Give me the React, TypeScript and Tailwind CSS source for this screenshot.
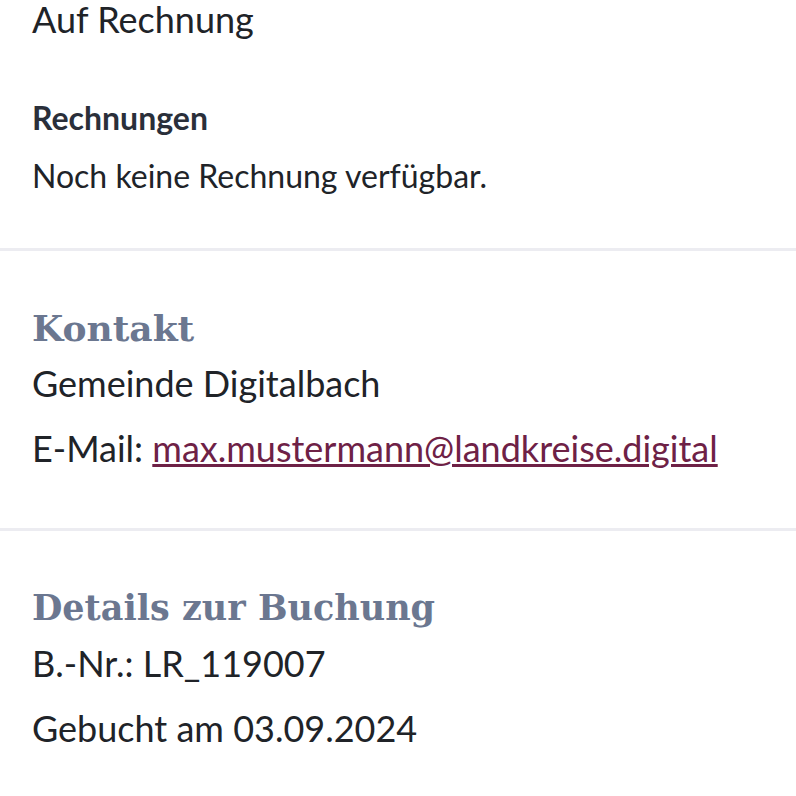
import React from "react";

const sans = { fontFamily: "Lato, 'Noto Sans', sans-serif" };
const serif = { fontFamily: "'DejaVu Serif', 'Liberation Serif', serif" };

export default function App() {
  return (
    <div className="w-[796px] h-[796px] overflow-hidden bg-white" style={sans}>
      <section className="px-8 pb-[52px]">
        <p className="text-[36px] leading-[38px] text-[#202328]">Auf Rechnung</p>
        <h3 className="mt-[60px] text-[32px] leading-[40px] font-bold text-[#2a2f3a]">Rechnungen</h3>
        <p className="mt-[18px] text-[32px] leading-[40px] text-[#202328]">Noch keine Rechnung verfügbar.</p>
      </section>
      <div className="h-[3px] bg-[#ececf1]" />
      <section className="px-8 pt-[55px] pb-[58px]">
        <h2 className="text-[36px] leading-[44px] font-bold text-[#6b7790]" style={serif}>
          Kontakt
        </h2>
        <p className="mt-[11px] text-[36px] leading-[44px] text-[#202328]">Gemeinde Digitalbach</p>
        <p className="mt-[21px] text-[36px] leading-[44px] text-[#202328]">
          E-Mail:{" "}
          <a href="#" className="text-[#6e2146] underline decoration-[3px] underline-offset-[2px]">
            max.mustermann@landkreise.digital
          </a>
        </p>
      </section>
      <div className="h-[3px] bg-[#ececf1]" />
      <section className="px-8 pt-[55px]">
        <h2 className="text-[35px] leading-[44px] font-bold text-[#6b7790]" style={serif}>
          Details zur Buchung
        </h2>
        <p className="mt-[11px] text-[36px] leading-[44px] text-[#202328]">B.-Nr.: LR_119007</p>
        <p className="mt-[21px] text-[36px] leading-[44px] text-[#202328]">Gebucht am 03.09.2024</p>
      </section>
    </div>
  );
}
